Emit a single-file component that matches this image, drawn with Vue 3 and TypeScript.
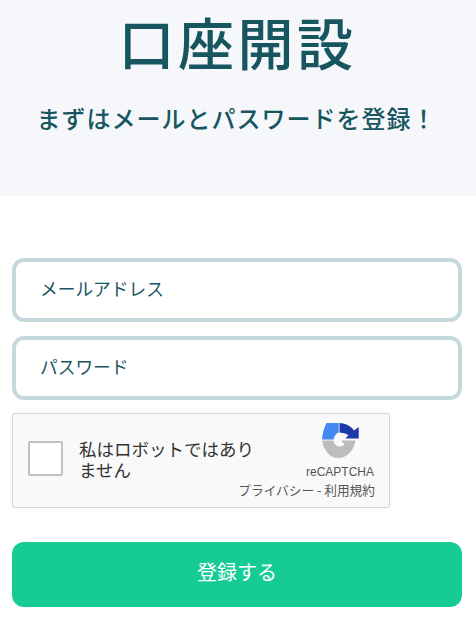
<script setup lang="ts">
const title = '口座開設'
</script>

<template>
  <div class="page">
    <header class="hero">
      <h1 class="title">{{ title }}</h1>
      <p class="lead">まずはメールとパスワードを登録！</p>
    </header>
    <form class="form" @submit.prevent>
      <input class="field" type="email" placeholder="メールアドレス" />
      <input class="field" type="password" placeholder="パスワード" />
      <div class="captcha">
        <div class="check"></div>
        <div class="robot">私はロボットではありません</div>
        <div class="brand">
          <svg class="logo" viewBox="0 0 38 37" width="38" height="37">
            <path d="M5.5 1 L17.7 1 L17.7 10.5 Q14 11.5 12.5 17.5 L1 17.5 Q1.5 9 5.5 1 Z" fill="#4489f2" />
            <path d="M18.5 1 Q26 1.5 31 6 L33 8.5 L37.7 5 L37.7 16.5 L24.5 16.5 L27.5 13 Q23.5 10.5 18.5 10.5 Z" fill="#1c3aa9" />
            <path d="M1 18.5 L12.5 18.5 Q13 23 17.5 24.5 Q21 24.8 23.5 22.5 L20 18.5 L34.5 18.5 Q33.5 26 28.5 31 Q23 36.5 17 36 Q9 35.5 5 29 Q1.5 24 1 18.5 Z" fill="#bdbdbd" />
          </svg>
          <div class="name">reCAPTCHA</div>
          <div class="links">プライバシー - 利用規約</div>
        </div>
      </div>
      <button class="submit" type="submit">登録する</button>
    </form>
  </div>
</template>

<style>
html, body { margin: 0; padding: 0; background: #fff; overflow: hidden; }
</style>

<style scoped>
.page {
  width: 476px;
  height: 621px;
  overflow: hidden;
  font-family: "Noto Sans CJK JP", "Noto Sans", sans-serif;
  color: #17565f;
}
.hero {
  height: 196px;
  background: #f5f7fb;
  text-align: center;
  display: flex;
  flex-direction: column;
  align-items: center;
}
.title {
  margin: 11px 1px 0 0;
  font-size: 56px;
  line-height: 60px;
  font-weight: 500;
  letter-spacing: 3.5px;
}
.lead {
  margin: 32px 3px 0 0;
  font-size: 24px;
  line-height: 30px;
  font-weight: 500;
  letter-spacing: 1px;
}
.form {
  padding: 62px 14px 0 12px;
  display: flex;
  flex-direction: column;
}
.field {
  box-sizing: border-box;
  width: 450px;
  height: 64px;
  border: 4px solid #c5d9dd;
  border-radius: 12px;
  padding: 0 24px 4px;
  margin-bottom: 14px;
  font: 400 17.7px "Noto Sans CJK JP", sans-serif;
  color: #17565f;
  background: #fff;
  outline: none;
}
.field::placeholder { color: #17565f; opacity: 1; }
.captcha {
  box-sizing: border-box;
  width: 378px;
  height: 95px;
  margin-top: -1px;
  border: 1px solid #d6d6d6;
  border-radius: 3px;
  background: #f9f9f9;
  box-shadow: 0 0 3px rgba(0, 0, 0, 0.08);
  display: flex;
  align-items: center;
  position: relative;
  color: #222;
}
.check {
  box-sizing: border-box;
  width: 35px;
  height: 35px;
  margin: 0 0 4px 15px;
  border: 2px solid #c1c1c1;
  border-radius: 2px;
  background: #fff;
}
.robot {
  width: 182px;
  margin: 0 0 4px 16px;
  font-size: 17.5px;
  font-weight: 400;
  line-height: 21px;
  color: #333;
}
.brand {
  position: absolute;
  right: 14px;
  top: 8px;
  display: flex;
  flex-direction: column;
  align-items: flex-end;
}
.logo { margin-right: 16px; }
.name {
  margin-top: 5px;
  margin-right: 1px;
  font: 400 12px/16px "Liberation Sans", sans-serif;
  color: #555;
}
.links {
  margin-top: 1px;
  font-size: 12.7px;
  font-weight: 400;
  line-height: 18px;
  color: #555;
  white-space: nowrap;
}
.submit {
  width: 450px;
  height: 65px;
  margin-top: 34px;
  padding: 0 0 6px;
  border: 0;
  border-radius: 12px;
  background: #17cb95;
  color: #fff;
  font: 400 20px "Noto Sans CJK JP", sans-serif;
}
</style>
